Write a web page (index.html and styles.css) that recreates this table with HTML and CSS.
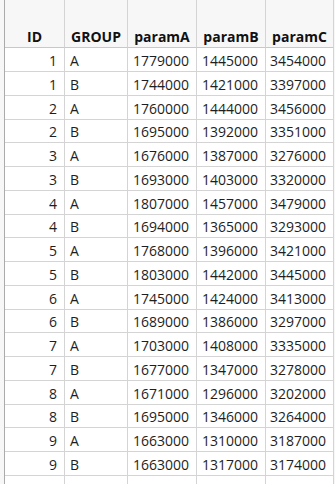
FILE: index.html
```html
<!DOCTYPE html>
<html>
<head>
<meta charset="utf-8">
<link rel="stylesheet" href="styles.css">
</head>
<body>
<div class="sheet">
  <div class="grid" id="grid">
    <div class="c h">ID</div><div class="c h">GROUP</div><div class="c h">paramA</div><div class="c h">paramB</div><div class="c h">paramC</div>
    <div class="c n">1</div><div class="c t">A</div><div class="c n">1779000</div><div class="c n">1445000</div><div class="c n">3454000</div>
    <div class="c n">1</div><div class="c t">B</div><div class="c n">1744000</div><div class="c n">1421000</div><div class="c n">3397000</div>
    <div class="c n">2</div><div class="c t">A</div><div class="c n">1760000</div><div class="c n">1444000</div><div class="c n">3456000</div>
    <div class="c n">2</div><div class="c t">B</div><div class="c n">1695000</div><div class="c n">1392000</div><div class="c n">3351000</div>
    <div class="c n">3</div><div class="c t">A</div><div class="c n">1676000</div><div class="c n">1387000</div><div class="c n">3276000</div>
    <div class="c n">3</div><div class="c t">B</div><div class="c n">1693000</div><div class="c n">1403000</div><div class="c n">3320000</div>
    <div class="c n">4</div><div class="c t">A</div><div class="c n">1807000</div><div class="c n">1457000</div><div class="c n">3479000</div>
    <div class="c n">4</div><div class="c t">B</div><div class="c n">1694000</div><div class="c n">1365000</div><div class="c n">3293000</div>
    <div class="c n">5</div><div class="c t">A</div><div class="c n">1768000</div><div class="c n">1396000</div><div class="c n">3421000</div>
    <div class="c n">5</div><div class="c t">B</div><div class="c n">1803000</div><div class="c n">1442000</div><div class="c n">3445000</div>
    <div class="c n">6</div><div class="c t">A</div><div class="c n">1745000</div><div class="c n">1424000</div><div class="c n">3413000</div>
    <div class="c n">6</div><div class="c t">B</div><div class="c n">1689000</div><div class="c n">1386000</div><div class="c n">3297000</div>
    <div class="c n">7</div><div class="c t">A</div><div class="c n">1703000</div><div class="c n">1408000</div><div class="c n">3335000</div>
    <div class="c n">7</div><div class="c t">B</div><div class="c n">1677000</div><div class="c n">1347000</div><div class="c n">3278000</div>
    <div class="c n">8</div><div class="c t">A</div><div class="c n">1671000</div><div class="c n">1296000</div><div class="c n">3202000</div>
    <div class="c n">8</div><div class="c t">B</div><div class="c n">1695000</div><div class="c n">1346000</div><div class="c n">3264000</div>
    <div class="c n">9</div><div class="c t">A</div><div class="c n">1663000</div><div class="c n">1310000</div><div class="c n">3187000</div>
    <div class="c n">9</div><div class="c t">B</div><div class="c n">1663000</div><div class="c n">1317000</div><div class="c n">3174000</div>
    <div class="c"></div><div class="c"></div><div class="c"></div><div class="c"></div><div class="c"></div>
  </div>
</div>
</body>
</html>
```
FILE: styles.css
```css
html, body {
  margin: 0;
  padding: 0;
  background: #ffffff;
  overflow: hidden;
}
.sheet {
  display: flex;
  padding-left: 4px;
  background: #f7f7f7;
  width: 335px;
  height: 484px;
  box-sizing: border-box;
  font-family: "Open Sans", "Liberation Sans", sans-serif;
  font-size: 14px;
  color: #1e1e1e;
}
.grid {
  display: grid;
  grid-template-columns: 60px 63px 69px 69px 68px;
  grid-template-rows: 48px repeat(4, 24px 24px 24px 23px) 24px 24px 24px;
  border-left: 1px solid #ababab;
  background: #ffffff;
  align-self: flex-start;
}
.c {
  box-sizing: border-box;
  border-right: 1px solid #d4d4d4;
  border-bottom: 1px solid #d4d4d4;
  display: flex;
  align-items: flex-end;
  padding-bottom: 1px;
  white-space: nowrap;
  overflow: hidden;
}
.h {
  background: #f7f7f7;
  font-weight: 700;
  justify-content: center;
  color: #111111;
  border-bottom-color: #c8c8c8;
}
.n {
  justify-content: flex-end;
  padding-right: 7px;
}
.t {
  justify-content: flex-start;
  padding-left: 5px;
}
```
